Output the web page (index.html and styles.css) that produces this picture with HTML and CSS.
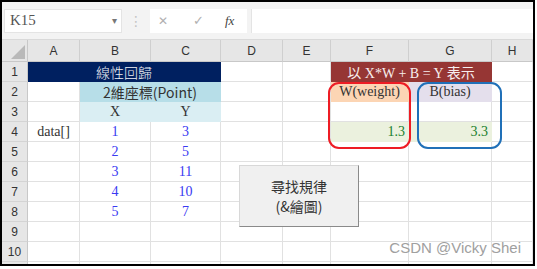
FILE: index.html
```html
<!DOCTYPE html>
<html>
<head>
<meta charset="utf-8">
<link rel="stylesheet" href="styles.css">
</head>
<body>
<div class="frame">
  <div class="toolbar">
    <div class="namebox"><span class="ref">K15</span><span class="arrow">▾</span></div>
    <div class="dots">⋮</div>
    <div class="fxbtns"><span class="tb-x">✕</span><span class="tb-ok">✓</span><span class="tb-fx">fx</span></div>
    <div class="formula"></div>
  </div>
  <div class="sheet">
    <div class="corner"><svg width="14" height="14" viewBox="0 0 14 14"><polygon points="14,0 14,14 0,14" fill="#b9b9b9"/></svg></div>
    <div class="ch">A</div><div class="ch">B</div><div class="ch">C</div><div class="ch">D</div><div class="ch">E</div><div class="ch">F</div><div class="ch">G</div><div class="ch">H</div>

    <div class="rh">1</div>
    <div class="c navy span3">線性回歸</div><div class="c"></div><div class="c"></div>
    <div class="c maroon span2">以 X*W + B = Y 表示</div><div class="c"></div>

    <div class="rh">2</div>
    <div class="c"></div><div class="c blue2 span2">2維座標(Point)</div><div class="c"></div><div class="c"></div>
    <div class="c peach serif">W(weight)</div><div class="c lav serif">B(bias)</div><div class="c"></div>

    <div class="rh">3</div>
    <div class="c"></div><div class="c blue3 serif">X</div><div class="c blue3 serif">Y</div><div class="c"></div><div class="c"></div>
    <div class="c"></div><div class="c"></div><div class="c"></div>

    <div class="rh">4</div>
    <div class="c serif">data[]</div><div class="c num">1</div><div class="c num">3</div><div class="c"></div><div class="c"></div>
    <div class="c green val">1.3</div><div class="c green val">3.3</div><div class="c"></div>

    <div class="rh">5</div>
    <div class="c"></div><div class="c num">2</div><div class="c num">5</div><div class="c"></div><div class="c"></div>
    <div class="c"></div><div class="c"></div><div class="c"></div>

    <div class="rh">6</div>
    <div class="c"></div><div class="c num">3</div><div class="c num">11</div><div class="c"></div><div class="c"></div>
    <div class="c"></div><div class="c"></div><div class="c"></div>

    <div class="rh">7</div>
    <div class="c"></div><div class="c num">4</div><div class="c num">10</div><div class="c"></div><div class="c"></div>
    <div class="c"></div><div class="c"></div><div class="c"></div>

    <div class="rh">8</div>
    <div class="c"></div><div class="c num">5</div><div class="c num">7</div><div class="c"></div><div class="c"></div>
    <div class="c"></div><div class="c"></div><div class="c"></div>

    <div class="rh">9</div>
    <div class="c"></div><div class="c"></div><div class="c"></div><div class="c"></div><div class="c"></div>
    <div class="c"></div><div class="c"></div><div class="c"></div>

    <div class="rh">10</div>
    <div class="c"></div><div class="c"></div><div class="c"></div><div class="c"></div><div class="c"></div>
    <div class="c"></div><div class="c"></div><div class="c"></div>

    <div class="rh"></div>
    <div class="c"></div><div class="c"></div><div class="c"></div><div class="c"></div><div class="c"></div>
    <div class="c"></div><div class="c"></div><div class="c"></div>

    <div class="ring ring-red"></div>
    <div class="ring ring-blue"></div>
    <div class="button">尋找規律<br>(&amp;繪圖)</div>
  </div>
  <div class="watermark">CSDN @Vicky Shei</div>
</div>
</body>
</html>
```

FILE: styles.css
```css
* { box-sizing: border-box; }
html, body { margin: 0; padding: 0; background: #fff; }

.frame {
  width: 535px;
  height: 266px;
  border: 2px solid #000;
  position: relative;
  overflow: hidden;
  background: #fff;
}

.toolbar {
  height: 38px;
  background: #f3f3f3;
  border-bottom: 1px solid #d9d9d9;
  display: flex;
  align-items: center;
}

.namebox {
  margin-left: 2px;
  width: 118px;
  height: 24px;
  background: #fff;
  border: 1px solid #e4e4e4;
  display: flex;
  align-items: center;
  justify-content: space-between;
  padding: 0 4px 0 5px;
}
.ref { font: 15px "Liberation Serif", serif; color: #555; }
.arrow { font: 10px "DejaVu Sans", sans-serif; color: #777; }

.dots {
  width: 28px;
  text-align: center;
  font: 14px "DejaVu Sans", sans-serif;
  color: #c4c4c4;
}

.fxbtns {
  width: 97px;
  height: 24px;
  background: #fff;
  display: flex;
  align-items: center;
  padding-left: 8px;
}
.tb-x { font: 12px "DejaVu Sans", sans-serif; color: #b0b0b0; width: 35px; }
.tb-ok { font: 13px "DejaVu Sans", sans-serif; color: #b0b0b0; width: 32px; }
.tb-fx { font: italic 13px "Liberation Serif", serif; color: #444; }

.formula {
  flex: 1;
  height: 24px;
  margin-left: 4px;
  background: #fff;
  border-left: 1px solid #e4e4e4;
}

.sheet {
  position: relative;
  display: grid;
  grid-template-columns: 26px 52px 71px 70px 62px 48px 78px 83px 41px;
  grid-template-rows: 22px;
  grid-auto-rows: 20px;
}

.corner {
  background: #e6e6e6;
  border-right: 1px solid #c8c8c8;
  border-bottom: 1px solid #c8c8c8;
  display: flex;
  align-items: flex-end;
  justify-content: flex-end;
  padding: 0 2px 2px 0;
}

.ch {
  background: #e6e6e6;
  border-right: 1px solid #cfcfcf;
  border-bottom: 1px solid #c8c8c8;
  font: 12px "Liberation Sans", sans-serif;
  color: #333;
  display: flex;
  align-items: center;
  justify-content: center;
}

.rh {
  background: #e6e6e6;
  border-right: 1px solid #c8c8c8;
  border-bottom: 1px solid #d4d4d4;
  font: 12px "Liberation Sans", sans-serif;
  color: #333;
  display: flex;
  align-items: center;
  justify-content: center;
}

.c {
  border-right: 1px solid #e1e1e1;
  border-bottom: 1px solid #e1e1e1;
  display: flex;
  align-items: center;
  justify-content: center;
  font: 14px "Noto Sans CJK TC", "Liberation Sans", sans-serif;
  color: #333;
  white-space: nowrap;
  overflow: hidden;
}

.span2 { grid-column: span 2; }
.span3 { grid-column: span 3; }

.serif { font: 14px "Liberation Serif", serif; color: #333; }
.num { font: 14px "Liberation Serif", serif; color: #3a3af2; }
.val { font: 14px "Liberation Serif", serif; color: #1a7f2e; justify-content: flex-end; padding-right: 3px; }

.navy { background: #002060; border-color: #002060; color: #f0f0f5; font-weight: 300; }
.maroon {
  background: #963634;
  border-color: #963634;
  color: #f7eeee;
  font: 14px "Liberation Serif", "Noto Sans CJK TC", serif;
}
.blue2 { background: #b7dee8; border-color: #b7dee8; }
.blue3 { background: #daeef3; border-color: #daeef3; }
.peach { background: #fcd5b4; border-color: #fcd5b4; }
.lav { background: #e4dfec; border-color: #e4dfec; }
.green { background: #ebf1de; border-color: #ebf1de; }

.ring {
  position: absolute;
  top: 42px;
  height: 67px;
  border-radius: 11px;
  border: 2px solid;
}
.ring-red { left: 326px; width: 83px; border-color: #ee1c24; }
.ring-blue { left: 415px; width: 85px; border-color: #2070b8; }

.button {
  position: absolute;
  left: 237px;
  top: 125px;
  width: 120px;
  height: 62px;
  background: #f0f0f0;
  border: 1px solid #d8d8d8;
  border-right-color: #8a8a8a;
  border-bottom-color: #8a8a8a;
  display: flex;
  align-items: center;
  justify-content: center;
  text-align: center;
  font: 14px/20px "Noto Sans CJK TC", "Liberation Sans", sans-serif;
  color: #333;
}

.watermark {
  position: absolute;
  right: 12px;
  top: 237px;
  font: 15px/17px "Liberation Sans", sans-serif;
  color: #a0a0a0;
}
```
